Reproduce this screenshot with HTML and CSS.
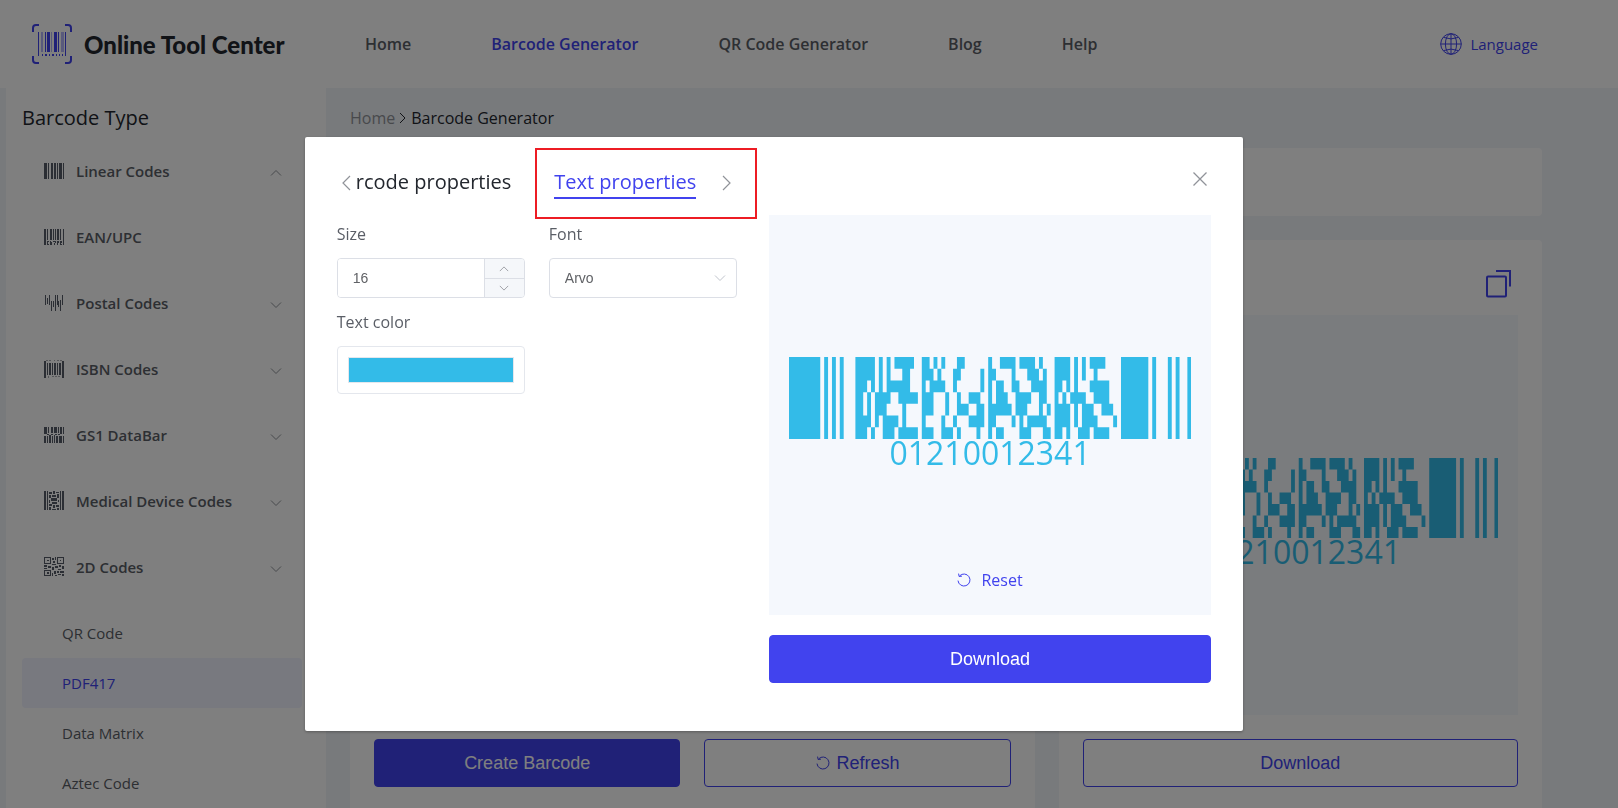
FILE: index.html
```html
<!DOCTYPE html>
<html lang="en">
<head>
  <meta charset="UTF-8" />
  <meta name="viewport" content="width=device-width, initial-scale=1.0">
  <title>Barcode Generator - Online Tool Center</title>
  <link rel="stylesheet" href="styles.css">
</head>
<body>
  <!-- Shared icons -->
  <svg class="sprite" aria-hidden="true">
    <symbol id="icon-down" viewBox="0 0 12 12"><path d="M1 3.5l5 5 5-5" fill="none" stroke="currentColor" /></symbol>
    <symbol id="icon-up" viewBox="0 0 12 12"><path d="M1 8.5l5-5 5 5" fill="none" stroke="currentColor" /></symbol>
    <symbol id="icon-reset" viewBox="0 0 14 14">
      <path d="M2.6 2.9A6 6 0 1 1 1 7.6M1.6 .6l.5 2.9 2.9-.4" fill="none" stroke="currentColor" />
    </symbol>
    <symbol id="pdf417" viewBox="0 0 103 21"><path id="pdf417Bars" fill="currentColor" /></symbol>
  </svg>

  <header class="header">
    <a class="logo" href="#">
      <svg class="logo-mark" viewBox="0 0 40 40" aria-hidden="true">
        <path d="M1 8V4q0-3 3-3h3M33 1h3q3 0 3 3v4M39 32v4q0 3-3 3h-3M7 39H4q-3 0-3-3v-4" fill="none" stroke="currentColor" stroke-width="2" />
        <path d="M6 8h1v24H6zM33 8h1v24h-1zM13 8h1v20h-1zM15 8h3v20h-3zM22 8h3v20h-3zM26 8h1v20h-1z" fill="currentColor" />
        <path d="M9 8h2v20H9zM19 8h1v20h-1zM29 8h2v20h-2zM31 8h1v20h-1z" fill="currentColor" opacity=".4" />
        <path d="M10 30h1v2h-1zM13 30h2v2h-2zM17 30h1v2h-1zM20 30h2v2h-2zM24 30h1v2h-1zM27 30h1v2h-1zM30 30h1v2h-1z" fill="currentColor" />
      </svg>
      <span>Online Tool Center</span>
    </a>
    <nav class="nav">
      <a href="#">Home</a>
      <a href="#" class="active">Barcode Generator</a>
      <a href="#">QR Code Generator</a>
      <a href="#">Blog</a>
      <a href="#">Help</a>
    </nav>
    <a class="language" href="#">
      <svg viewBox="0 0 22 22" aria-hidden="true">
        <g fill="none" stroke="currentColor">
          <circle cx="11" cy="11" r="10.3" />
          <ellipse cx="11" cy="11" rx="5.6" ry="10.3" />
          <path d="M11 1v20M.7 11h20.6M3.5 4.4q7.500 3 15 0M3.500 17.600q7.500-3 15 0" />
        </g>
      </svg>
      <span>Language</span>
    </a>
  </header>

  <div class="page">
    <!-- Barcode type menu -->
    <aside class="sidebar">
      <h2>Barcode Type</h2>
      <ul class="menu">
        <li>
          <a href="#">
            <svg class="type-icon" viewBox="0 0 20 20"><path d="M0 2h3v16H0zM4 2h1v16H4zM7 2h2v16H7zM10 2h2v16h-2zM13 2h1v16h-1zM15 2h3v16h-3zM19 2h1v16h-1z" /></svg>
            <span>Linear Codes</span>
            <svg class="arrow"><use href="#icon-up" /></svg>
          </a>
        </li>
        <li>
          <a href="#">
            <svg class="type-icon" viewBox="0 0 20 20"><path d="M0 2h2v16H0zM3 2h1v11H3zM6 2h2v11H6zM9 2h1v11H9zM11 2h1v11h-1zM13 2h2v11h-2zM16 2h1v11h-1zM19 2h1v16h-1zM3 14h2v1H4v2h1v1H3zM6 14h1v1h1v3H6zM9 14h3l-1 4h-1l1-3H9zM13 14h2v2h-1v2h-1zM16 14h2v2h-1v1h1v1h-2z" /></svg>
            <span>EAN/UPC</span>
          </a>
        </li>
        <li>
          <a href="#">
            <svg class="type-icon" viewBox="0 0 20 20"><path d="M1 2h1v10H1zM3 5h1v6H3zM5 2h1v10H5zM7 8h1v10H7zM9 8h1v6H9zM11 2h1v16h-1zM13 2h1v10h-1zM14 8h1v6h-1zM16 7h1v11h-1zM18 2h1v10h-1z" /></svg>
            <span>Postal Codes</span>
            <svg class="arrow"><use href="#icon-down" /></svg>
          </a>
        </li>
        <li>
          <a href="#">
            <svg class="type-icon" viewBox="0 0 20 20"><path d="M0 2h2v17H0zM3 4h1v12H3zM5 4h2v12H5zM8 4h1v12H8zM10 4h2v12h-2zM13 4h1v12h-1zM15 4h2v12h-2zM18 2h2v17h-2z" /><path opacity=".5" d="M2 1h2v1H2zM5 1h2v1H5zM10 1h1v1h-1zM13 1h2v1h-2zM16 1h2v1h-2zM4 17h1v2H4zM8 17h2v1H8zM11 17h2v1h-2zM14 17h2v1h-2z" /></svg>
            <span>ISBN Codes</span>
            <svg class="arrow"><use href="#icon-down" /></svg>
          </a>
        </li>
        <li>
          <a href="#">
            <svg class="type-icon" viewBox="0 0 20 20"><path d="M0 2h3v7H0zM4 2h1v6H4zM7 2h2v6H7zM10 2h3v6h-3zM14 2h1v6h-1zM16 2h2v7h-2zM19 2h1v7h-1zM0 11h2v7H0zM3 11h1v7H3zM5 10h2v8H5zM8 11h1v7H8zM10 10h1v8h-1zM12 11h2v7h-2zM15 11h3v7h-3zM19 11h1v7h-1zM3 9h2v1H3zM7 9h2v1H7zM11 9h2v1h-2zM14 9h2v1h-2z" /></svg>
            <span>GS1 DataBar</span>
            <svg class="arrow"><use href="#icon-down" /></svg>
          </a>
        </li>
        <li>
          <a href="#">
            <svg class="type-icon" viewBox="0 0 20 20"><path d="M0 0h2v19H0zM3 0h1v19H3zM16 0h1v19h-1zM18 0h2v19h-2zM5 1h3v2H5zM9 0h2v3H9zM12 1h3v1h-3zM5 4h2v3H5zM8 4h4v2H8zM13 3h2v4h-2zM7 7h6v3H7zM5 9h1v3H5zM14 9h1v2h-1zM8 11h5v2H8zM5 13h3v2H5zM12 14h3v2h-3zM9 14h2v3H9zM5 16h2v3H5zM8 18h4v1H8zM13 17h2v2h-2z" /></svg>
            <span>Medical Device Codes</span>
            <svg class="arrow"><use href="#icon-down" /></svg>
          </a>
        </li>
        <li>
          <a href="#">
            <svg class="type-icon" viewBox="0 0 20 20"><path fill-rule="evenodd" d="M0 0h7v7H0zM1 1v5h5V1zM13 0h7v7h-7zM14 1v5h5V1zM0 13h7v6H0zM1 14v4h5v-4z" /><path d="M3 3h2v1H3zM16 3h1v1h-1zM3 15h2v2H3zM8 1h2v2H8zM11 0h1v3h-1zM9 4h2v2H9zM8 7h4v1H8zM0 8h3v2H0zM4 9h3v2H4zM8 10h2v3H8zM11 9h3v2h-3zM15 8h2v2h-2zM18 9h2v3h-2zM14 12h3v1h-3zM10 14h2v3h-2zM8 16h1v3H8zM13 14h2v2h-2zM16 14h4v2h-4zM14 17h3v1h-3zM18 17h2v2h-2zM11 18h2v1h-2zM0 11h3v1H0z" /></svg>
            <span>2D Codes</span>
            <svg class="arrow"><use href="#icon-down" /></svg>
          </a>
        </li>
      </ul>
      <ul class="submenu">
        <li><a href="#">QR Code</a></li>
        <li><a href="#" class="active">PDF417</a></li>
        <li><a href="#">Data Matrix</a></li>
        <li><a href="#">Aztec Code</a></li>
      </ul>
    </aside>

    <main class="content">
      <div class="breadcrumb">
        <a href="#">Home</a>
        <svg viewBox="0 0 8 12" aria-hidden="true"><path d="M1 1l5 5-5 5" fill="none" stroke="currentColor" /></svg>
        <span>Barcode Generator</span>
      </div>
      <div class="card banner"></div>
      <div class="columns">
        <section class="card editor">
          <button type="button" class="btn btn-primary">Create Barcode</button>
          <button type="button" class="btn btn-outline">
            <svg aria-hidden="true"><use href="#icon-reset" /></svg>
            Refresh
          </button>
        </section>
        <section class="card result">
          <div class="result-head">
            <button type="button" class="icon-btn" aria-label="Copy">
              <svg class="copy-icon" viewBox="0 0 25 28"><path d="M2 6.500h17q1 0 1 1v18q0 1-1 1H2q-1 0-1-1v-18q0-1 1-1zM10 1h14v15.500" fill="none" stroke="currentColor" stroke-width="2" /></svg>
            </button>
          </div>
          <div class="preview">
            <div class="barcode">
              <svg viewBox="0 0 103 21"><use href="#pdf417" /></svg>
              <div class="barcode-text">01210012341</div>
            </div>
          </div>
          <button type="button" class="btn btn-outline">Download</button>
        </section>
      </div>
    </main>
  </div>

  <!-- Properties dialog -->
  <div class="overlay">
    <div class="modal" role="dialog" aria-modal="true">
      <div class="modal-left">
        <div class="tabs">
          <button type="button" class="icon-btn" aria-label="Previous">
            <svg class="tab-arrow" viewBox="0 0 10 16"><path d="M9 1L2 8l7 7" fill="none" stroke="currentColor" stroke-width="1.200" /></svg>
          </button>
          <button type="button" class="tab">rcode properties</button>
          <button type="button" class="tab active">Text properties</button>
          <button type="button" class="icon-btn" aria-label="Next">
            <svg class="tab-arrow" viewBox="0 0 10 16"><path d="M1 1l7 7-7 7" fill="none" stroke="currentColor" stroke-width="1.200" /></svg>
          </button>
          <div class="highlight"></div>
        </div>
        <form class="form">
          <div class="field">
            <label for="size">Size</label>
            <div class="number">
              <input type="text" id="size" value="16" inputmode="numeric">
              <div class="steps">
                <button type="button" aria-label="Increase"><svg><use href="#icon-up" /></svg></button>
                <button type="button" aria-label="Decrease"><svg><use href="#icon-down" /></svg></button>
              </div>
            </div>
          </div>
          <div class="field">
            <label for="font">Font</label>
            <div class="select">
              <select id="font">
                <option>Arvo</option>
              </select>
              <svg><use href="#icon-down" /></svg>
            </div>
          </div>
          <div class="field">
            <label for="color">Text color</label>
            <input type="color" id="color" value="#33bbe8">
          </div>
        </form>
      </div>

      <div class="modal-right">
        <div class="modal-head">
          <button type="button" class="icon-btn" aria-label="Close">
            <svg class="close-icon" viewBox="0 0 14 14"><path d="M.5 .5l13 13M13.500 .5l-13 13" fill="none" stroke="currentColor" stroke-width="1.300" /></svg>
          </button>
        </div>
        <div class="preview">
          <div class="barcode">
            <svg viewBox="0 0 103 21"><use href="#pdf417" /></svg>
            <div class="barcode-text">01210012341</div>
          </div>
          <button type="button" class="reset">
            <svg aria-hidden="true"><use href="#icon-reset" /></svg>
            Reset
          </button>
        </div>
        <button type="button" class="btn btn-primary">Download</button>
      </div>
    </div>
  </div>

  <script src="script.js"></script>
</body>
</html>
```

FILE: styles.css
```css
* {
  box-sizing: border-box;
}
body {
  margin: 0;
  font-family: 'Open Sans', 'Noto Sans', sans-serif;
  font-size: 16px;
  color: #5a5e66;
  background: #f1f4f8;
  overflow: hidden;
}
a {
  color: inherit;
  text-decoration: none;
}
ul {
  list-style: none;
  margin: 0;
  padding: 0;
}
button {
  font-family: 'Liberation Sans', Arial, sans-serif;
  cursor: pointer;
}
.sprite {
  display: none;
}
.icon-btn {
  display: flex;
  padding: 0;
  border: none;
  background: none;
  color: #909399;
}

/* Header */
.header {
  display: flex;
  align-items: center;
  height: 88px;
  padding: 0 80px 0 32px;
  background: #fff;
}
.logo {
  display: flex;
  align-items: center;
  gap: 12px;
  width: 333px;
  font-family: Lato, sans-serif;
  font-size: 24px;
  font-weight: 900;
  color: #23272e;
}
.logo-mark {
  width: 40px;
  height: 40px;
  color: #4143ee;
}
.nav {
  display: flex;
  gap: 80px;
  font-weight: 600;
}
.nav .active,
.language {
  color: #4143ee;
}
.language {
  display: flex;
  align-items: center;
  gap: 8px;
  margin-left: auto;
  font-size: 15px;
}
.language svg {
  width: 22px;
  height: 22px;
}

/* Sidebar */
.page {
  display: flex;
  padding-left: 6px;
}
.sidebar {
  flex: none;
  width: 320px;
  padding: 14px 24px 0 16px;
  background: #fff;
}
.sidebar h2 {
  margin: 0 0 12px;
  font-size: 20px;
  line-height: 32px;
  font-weight: 400;
  color: #23272e;
}
.menu a {
  display: flex;
  align-items: center;
  gap: 12px;
  height: 50px;
  margin-bottom: 16px;
  padding: 0 20px 0 22px;
  font-size: 15px;
  font-weight: 600;
}
.type-icon {
  width: 20px;
  height: 20px;
  fill: #565c68;
  shape-rendering: crispEdges;
}
.arrow {
  width: 12px;
  height: 12px;
  margin: 4px 0 0 auto;
  color: #909399;
}
.submenu a {
  display: block;
  padding-left: 40px;
  border-radius: 4px;
  font-size: 15px;
  line-height: 50px;
}
.submenu .active {
  background: #f0f2ff;
  color: #4143ee;
}

/* Content */
.content {
  flex: 1;
  padding: 14px 76px 0 24px;
}
.breadcrumb {
  display: flex;
  align-items: center;
  gap: 4px;
  height: 32px;
  margin-bottom: 14px;
  color: #23272e;
}
.breadcrumb a {
  color: #909399;
}
.breadcrumb svg {
  width: 8px;
  height: 12px;
}
.card {
  background: #fff;
  border-radius: 4px;
}
.banner {
  height: 68px;
  margin-bottom: 24px;
}
.columns {
  display: grid;
  grid-template-columns: 17fr 12fr;
  gap: 24px;
}
.editor,
.result {
  padding: 0 24px 24px;
}
.editor {
  display: flex;
  align-items: flex-end;
  gap: 24px;
}
.result-head {
  display: flex;
  align-items: center;
  justify-content: flex-end;
  height: 75px;
  padding: 12px 7px 0 0;
}
.result-head .icon-btn {
  color: #4143ee;
}
.copy-icon {
  width: 25px;
  height: 28px;
}
.btn {
  display: flex;
  align-items: center;
  justify-content: center;
  gap: 7px;
  width: 100%;
  height: 48px;
  border: 1px solid #4143ee;
  border-radius: 4px;
  font-size: 18px;
}
.btn svg,
.reset svg {
  width: 14px;
  height: 14px;
}
.btn-primary {
  background: #4143ee;
  color: #fff;
}
.btn-outline {
  background: none;
  color: #4143ee;
}

/* Barcode preview */
.preview {
  display: grid;
  grid-template-rows: 1fr auto 1fr;
  height: 400px;
  margin-bottom: 20px;
  padding: 0 20px;
  background: #f5f8fd;
}
.result .preview {
  margin-bottom: 24px;
}
.barcode {
  grid-row: 2;
  color: #33bbe8;
}
.barcode svg {
  display: block;
  width: 100%;
}
.barcode-text {
  padding-bottom: 6px;
  font-size: 32px;
  line-height: 28px;
  text-align: center;
}
.reset {
  display: flex;
  grid-row: 3;
  align-items: center;
  justify-self: center;
  align-self: end;
  gap: 10px;
  margin-bottom: 20px;
  padding: 0;
  border: none;
  background: none;
  font-family: inherit;
  font-size: 16px;
  line-height: 30px;
  color: #4143ee;
}

/* Dialog */
.overlay {
  position: fixed;
  inset: 0;
  padding-right: 70px;
  background: rgba(0, 0, 0, 0.5);
}
.modal {
  display: grid;
  grid-template-columns: 19fr 21fr;
  gap: 32px;
  width: 58vw;
  margin: 17vh auto 0;
  padding: 0 32px 48px;
  background: #fff;
  border-radius: 2px;
  box-shadow: 0 1px 3px rgba(0, 0, 0, 0.3);
}
.tabs {
  position: relative;
  display: flex;
  align-items: center;
  height: 85px;
  padding: 6px 4px 0;
}
.tab {
  padding: 0;
  margin: 0 43px 0 5px;
  border: none;
  border-bottom: 2px solid transparent;
  background: none;
  font-family: 'Open Sans', 'Noto Sans', sans-serif;
  font-size: 20px;
  line-height: 30px;
  white-space: nowrap;
  color: #23272e;
}
.tab.active {
  margin: 0 26px 0 0;
  border-color: #4143ee;
  color: #4143ee;
}
.tab-arrow {
  width: 10px;
  height: 16px;
}
/* Frame around the current tab */
.highlight {
  position: absolute;
  top: 11px;
  right: -20px;
  width: 222px;
  height: 71px;
  border: 2px solid #ed1c24;
  pointer-events: none;
}
.form {
  display: grid;
  grid-template-columns: 1fr 1fr;
  gap: 12px 24px;
}
.field label {
  display: block;
  margin-bottom: 12px;
  line-height: 24px;
}
.number,
.select select {
  height: 40px;
  border: 1px solid #dcdfe6;
  border-radius: 4px;
  overflow: hidden;
}
.number {
  display: flex;
}
.number input,
.select select {
  width: 100%;
  min-width: 0;
  padding: 0 15px;
  font-family: 'Liberation Sans', Arial, sans-serif;
  font-size: 14px;
  color: #606266;
  background: #fff;
}
.number input {
  border: none;
}
.steps {
  display: flex;
  flex: none;
  flex-direction: column;
  width: 40px;
  border-left: 1px solid #dcdfe6;
}
.steps button {
  display: flex;
  flex: 1;
  align-items: center;
  justify-content: center;
  padding: 0;
  border: none;
  background: #f5f7fa;
  color: #909399;
}
.steps button + button {
  border-top: 1px solid #dcdfe6;
}
.steps svg {
  width: 10px;
  height: 10px;
}
.select {
  position: relative;
}
.select select {
  appearance: none;
}
.select svg {
  position: absolute;
  top: 14px;
  right: 11px;
  width: 12px;
  height: 12px;
  color: #c0c4cc;
  pointer-events: none;
}
input[type="color"] {
  display: block;
  width: 100%;
  height: 48px;
  padding: 10px;
  border: 1px solid #e4e7ed;
  border-radius: 4px;
  background: #fff;
}
input[type="color"]::-webkit-color-swatch-wrapper {
  padding: 0;
}
input[type="color"]::-webkit-color-swatch {
  border: 1px solid #e4e7ed;
  border-radius: 0;
}
.modal-head {
  display: flex;
  align-items: center;
  justify-content: flex-end;
  height: 78px;
  padding: 6px 4px 0 0;
}
.close-icon {
  width: 14px;
  height: 14px;
}
```

FILE: script.js
```js
// Bar and space widths of each row, starting with a bar
const START = '81111113';
const STOP = '711311121';
const ROWS = [
  ['51111152', '21111326', '12414113', '41111144'],
  ['51111323', '31132511', '24133112', '41111216'],
  ['31111163', '11421611', '11222342', '21111353'],
  ['21114251', '33121232', '11324222', '11114243'],
  ['21113414', '33123221', '61331111', '41113232'],
  ['41114114', '14121341', '24111152', '41114411'],
  ['31123151', '32311412', '11243321', '21123143']
];

// Build one path for the whole PDF417 symbol, each row is 3 units high
function drawBarcode() {
  let d = '';
  ROWS.forEach((row, y) => {
    let x = 0;
    [START, ...row, STOP].forEach(word => {
      [...word].forEach((w, i) => {
        if (i % 2 === 0) d += `M${x} ${y * 3}h${w}v3h-${w}z`;
        x += Number(w);
      });
    });
  });
  document.getElementById('pdf417Bars').setAttribute('d', d);
}

drawBarcode();
```
